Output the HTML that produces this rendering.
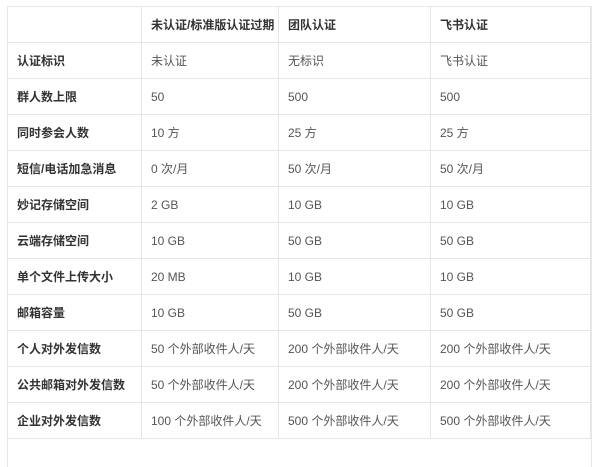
<!DOCTYPE html>
<html><head><meta charset="utf-8"><style>
html,body{margin:0;padding:0;background:#fff;width:600px;height:457px;overflow:hidden}
.wrap{position:absolute;left:7px;top:6px;width:583px;height:460px;border-left:1px solid #e6e6e6;border-right:1px solid #e6e6e6;border-top:1px solid #e6e6e6}
table{position:absolute;left:7px;top:6px;border-collapse:collapse;table-layout:fixed;font-family:"Liberation Sans","Noto Sans CJK SC",sans-serif;font-size:12px;color:#555}
td{border:1px solid #e6e6e6;height:35px;padding:0 0 0 9px;white-space:nowrap}
td:first-child{font-weight:bold;color:#333}
tr:first-child td{font-weight:bold;color:#333}
</style></head><body>
<div class="wrap"></div>
<table>
<colgroup><col style="width:134px"><col style="width:137px"><col style="width:152px"><col style="width:160px"></colgroup>
<tr><td></td><td>未认证/标准版认证过期</td><td>团队认证</td><td>飞书认证</td></tr>
<tr><td>认证标识</td><td>未认证</td><td>无标识</td><td>飞书认证</td></tr>
<tr><td>群人数上限</td><td>50</td><td>500</td><td>500</td></tr>
<tr><td>同时参会人数</td><td>10 方</td><td>25 方</td><td>25 方</td></tr>
<tr><td>短信/电话加急消息</td><td>0 次/月</td><td>50 次/月</td><td>50 次/月</td></tr>
<tr><td>妙记存储空间</td><td>2 GB</td><td>10 GB</td><td>10 GB</td></tr>
<tr><td>云端存储空间</td><td>10 GB</td><td>50 GB</td><td>50 GB</td></tr>
<tr><td>单个文件上传大小</td><td>20 MB</td><td>10 GB</td><td>10 GB</td></tr>
<tr><td>邮箱容量</td><td>10 GB</td><td>50 GB</td><td>50 GB</td></tr>
<tr><td>个人对外发信数</td><td>50 个外部收件人/天</td><td>200 个外部收件人/天</td><td>200 个外部收件人/天</td></tr>
<tr><td>公共邮箱对外发信数</td><td>50 个外部收件人/天</td><td>200 个外部收件人/天</td><td>200 个外部收件人/天</td></tr>
<tr><td>企业对外发信数</td><td>100 个外部收件人/天</td><td>500 个外部收件人/天</td><td>500 个外部收件人/天</td></tr>
</table>
</body></html>
